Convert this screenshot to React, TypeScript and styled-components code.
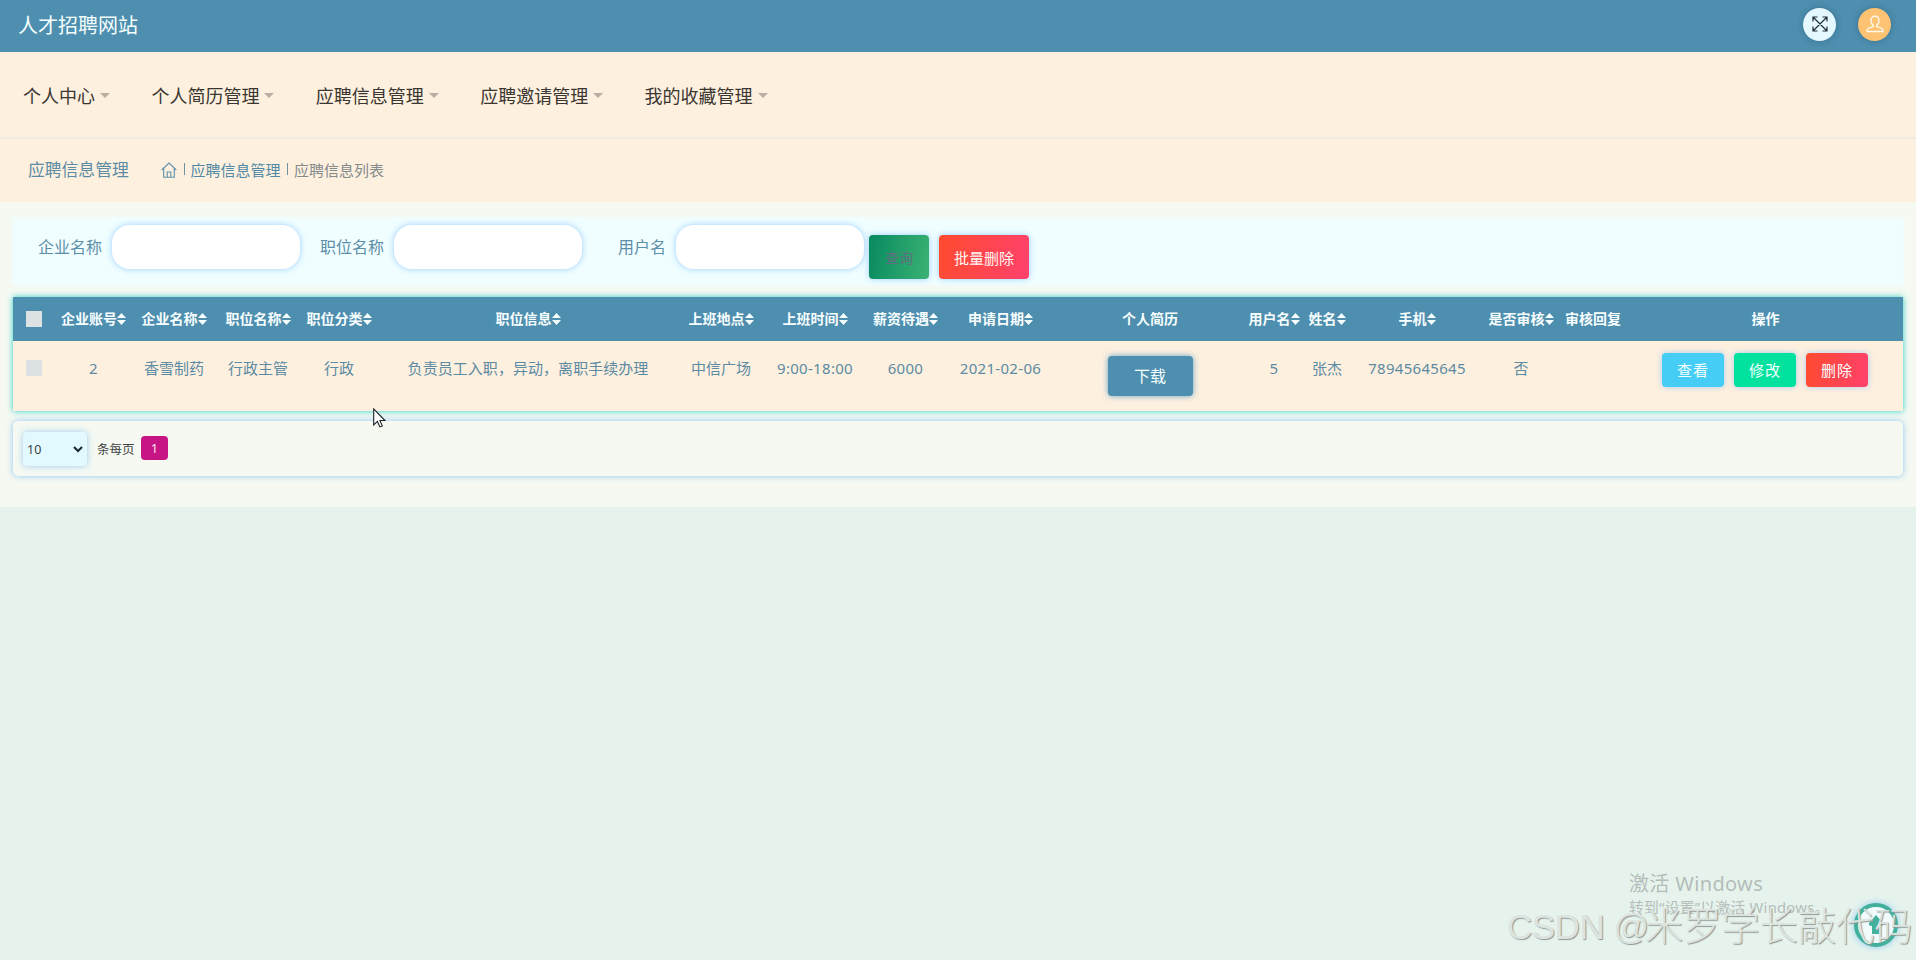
import React from "react";
import styled, { createGlobalStyle } from "styled-components";

const GlobalStyle = createGlobalStyle`
  * { box-sizing: border-box; }
  body {
    margin: 0;
    background: #e6f3ed;
    font-family: "Noto Sans", "Noto Sans CJK SC", sans-serif;
    font-size: 15px;
    color: #5c8ba3;
    overflow: hidden;
  }
  button, input, select { font-family: inherit; }
`;

const Page = styled.div`
  position: relative;
  height: 960px;
  overflow: hidden;
`;

const Header = styled.header`
  height: 52px;
  padding: 0 25px 0 18px;
  display: flex;
  align-items: center;
  justify-content: space-between;
  background: #4e8eae;
`;

const Brand = styled.h1`
  margin: 0;
  font-size: 20px;
  line-height: 28px;
  font-weight: 400;
  color: #f4feff;
`;

const HeaderActions = styled.div`
  display: flex;
  gap: 22px;
  padding-bottom: 4px;
`;

const RoundButton = styled.button<{ $bg: string }>`
  width: 33px;
  height: 33px;
  padding: 0;
  display: flex;
  align-items: center;
  justify-content: center;
  border: 0;
  border-radius: 50%;
  background: ${(p) => p.$bg};
  box-shadow: 0 0 6px rgba(30, 80, 110, 0.45);
`;

const Nav = styled.nav`
  height: 87px;
  padding: 2px 24px 0 23px;
  display: flex;
  align-items: center;
  gap: 41.4px;
  background: #fef0df;
  border-bottom: 2px solid #efebe2;
`;

const NavItem = styled.a`
  display: flex;
  align-items: center;
  gap: 5px;
  font-size: 18px;
  line-height: 26px;
  color: #3a3631;

  &::after {
    content: "";
    border: 5px solid transparent;
    border-top-color: #b9aea1;
    border-bottom: 0;
  }
`;

const Crumbs = styled.div`
  height: 63px;
  padding: 0 28px 2px;
  display: flex;
  align-items: center;
  background: #fef0df;
`;

const CrumbTitle = styled.h2`
  margin: 0 32px 0 0;
  width: 101px;
  font-size: 16.800px;
  line-height: 24px;
  font-weight: 400;
  white-space: nowrap;
`;

const CrumbText = styled.span<{ $muted?: boolean }>`
  font-size: 15px;
  line-height: 22px;
  color: ${(p) => (p.$muted ? "#848b8b" : "#5089a5")};
`;

const CrumbBar = styled.i`
  width: 1px;
  height: 12px;
  margin: 0 6px 2px 6.500px;
  background: #6f92a1;
`;

const Content = styled.main`
  height: 305px;
  padding: 16px 13px 0;
  background: #f5f9f2;
`;

const Filters = styled.form`
  height: 67px;
  padding: 7px 0 0 25px;
  display: flex;
  align-items: flex-start;
  background: #f0feff;
  box-shadow: 0 0 4px #f0feff;
`;

const Field = styled.label<{ $after: number }>`
  display: flex;
  align-items: center;
  gap: 10px;
  margin-right: ${(p) => p.$after}px;
  font-size: 16px;
  line-height: 24px;
  color: #5e8fa9;
`;

const TextInput = styled.input`
  width: 188px;
  height: 44px;
  padding: 0 14px;
  border: 0;
  border-radius: 18px;
  background: #fff;
  box-shadow: 0 0 6px rgba(110, 180, 250, 0.65);
`;

const FilterButton = styled.button<{ $w: number; $bg: string; $color: string; $size: number }>`
  width: ${(p) => p.$w}px;
  height: 44px;
  margin: 10px 10px 0 0;
  padding: 0;
  border: 0;
  border-radius: 4px;
  background: ${(p) => p.$bg};
  color: ${(p) => p.$color};
  font-size: ${(p) => p.$size}px;
  box-shadow: 0 0 6px rgba(110, 180, 250, 0.65);
`;

const Table = styled.table`
  width: 100%;
  margin-top: 12px;
  table-layout: fixed;
  border-collapse: collapse;
  background: #fef0df;
  box-shadow: 0 0 6px rgba(25, 205, 195, 0.95);
`;

const Th = styled.th`
  height: 44px;
  padding: 0;
  background: #4e8eae;
  color: #f7feff;
  font-size: 14px;
  line-height: 20px;
  white-space: nowrap;
`;

const HeadLabel = styled.span`
  display: flex;
  align-items: center;
  justify-content: center;
`;

const Td = styled.td<{ $top?: number; $numeric?: boolean }>`
  height: 70px;
  padding: ${(p) => p.$top ?? 16}px 0 0;
  vertical-align: top;
  text-align: center;
  line-height: 22px;
  letter-spacing: ${(p) => (p.$numeric ? 0.3 : 0.05)}px;
  white-space: nowrap;
`;

const Check = styled.i`
  display: block;
  width: 16px;
  height: 16px;
  margin-left: 13px;
  background: #dce1e3;
`;

const Download = styled.button`
  width: 85px;
  height: 40px;
  padding: 0 0 2px;
  border: 0;
  border-radius: 4px;
  background: #4e8eae;
  color: #f4feff;
  font-size: 16px;
  box-shadow: 0 0 6px rgba(50, 140, 190, 0.75);
`;

const RowActions = styled.div`
  display: flex;
  justify-content: center;
  gap: 10px;
  padding-right: 2px;
`;

const ActionButton = styled.button<{ $bg: string }>`
  width: 62px;
  height: 34px;
  padding: 0 0 2px 1px;
  border: 0;
  border-radius: 4px;
  background: ${(p) => p.$bg};
  color: #f5ffff;
  font-size: 15px;
  letter-spacing: 1px;
  box-shadow: 0 0 6px rgba(110, 180, 250, 0.6);
`;

const Pager = styled.div`
  height: 55px;
  margin-top: 10px;
  padding: 1px 10px 0;
  display: flex;
  align-items: center;
  border-radius: 5px;
  box-shadow: 0 0 6px rgba(110, 180, 240, 0.75);
  font-size: 12.5px;
  color: #3e4444;
`;

const PageSize = styled.div`
  width: 64px;
  height: 34px;
  margin-right: 10px;
  padding: 0 4px;
  display: flex;
  align-items: center;
  justify-content: space-between;
  border-radius: 4px;
  background: #e2f9ff;
  box-shadow: 0 0 6px rgba(110, 180, 240, 0.65);
  font-size: 12.500px;
`;

const PageLabel = styled.span`
  width: 38px;
  padding-bottom: 1px;
  white-space: nowrap;
`;

const PageButton = styled.button`
  width: 27px;
  height: 24px;
  margin: 0 0 3px 6px;
  padding: 1px 0 0;
  border: 0;
  border-radius: 4px;
  background: #c71585;
  color: #fbe6f3;
  font-size: 13px;
`;

const Pointer = styled.svg`
  position: absolute;
  left: 373px;
  top: 408px;
`;

const Activation = styled.div`
  position: absolute;
  left: 1629px;
  top: 870px;
  color: #b4bdb9;
  white-space: nowrap;
`;

const ActivationTitle = styled.div`
  font-size: 20px;
  line-height: 28px;
  letter-spacing: 0.350px;
`;

const ActivationHint = styled.div`
  font-size: 14.8px;
  line-height: 19px;
  letter-spacing: 0.250px;
`;

const ToTop = styled.button`
  position: absolute;
  left: 1854px;
  top: 903px;
  width: 44px;
  height: 44px;
  padding: 0;
  display: flex;
  align-items: center;
  justify-content: center;
  border: 4px solid #43b09b;
  border-radius: 50%;
  background: #f1fbfc;
  box-shadow: 0 0 6px rgba(110, 190, 240, 0.8);
`;

const Watermark = styled.div`
  position: absolute;
  left: 1507px;
  top: 900px;
  display: flex;
  font-family: "Liberation Sans", "Noto Sans CJK SC", sans-serif;
  font-weight: 300;
  font-size: 38.200px;
  line-height: 54px;
  color: #dde4e0;
  text-shadow: 1px 1px 1px #8f9794;
  white-space: nowrap;
`;

const WatermarkLatin = styled.span`
  font-size: 35px;
  width: 138px;
  letter-spacing: -0.5px;
`;

const SortIcon = () => (
  <svg width="9" height="12" viewBox="0 0 9 12" fill="#f7feff">
    <path d="M4.5 0 9 5H0zM4.5 12 0 7h9z" />
  </svg>
);

const columns = [
  { label: "企业账号", width: 77, sortable: true, numeric: true, value: "2" },
  { label: "企业名称", width: 84, sortable: true, value: "香雪制药" },
  { label: "职位名称", width: 84, sortable: true, value: "行政主管" },
  { label: "职位分类", width: 78, sortable: true, value: "行政" },
  { label: "职位信息", width: 300, sortable: true, value: "负责员工入职，异动，离职手续办理" },
  { label: "上班地点", width: 86, sortable: true, value: "中信广场" },
  { label: "上班时间", width: 102, sortable: true, numeric: true, value: "9:00-18:00" },
  { label: "薪资待遇", width: 79, sortable: true, numeric: true, value: "6000" },
  { label: "申请日期", width: 111, sortable: true, numeric: true, value: "2021-02-06" },
  { label: "个人简历", width: 188, kind: "download" },
  { label: "用户名", width: 60, sortable: true, numeric: true, value: "5" },
  { label: "姓名", width: 46, sortable: true, value: "张杰" },
  { label: "手机", width: 134, sortable: true, numeric: true, value: "78945645645" },
  { label: "是否审核", width: 74, sortable: true, value: "否" },
  { label: "审核回复", width: 70, value: "" },
  { label: "操作", width: 275, kind: "actions" },
];

const menus = ["个人中心", "个人简历管理", "应聘信息管理", "应聘邀请管理", "我的收藏管理"];

const redGradient = "linear-gradient(100deg, #ff4b2f, #ff416c)";

export default function App() {
  return (
    <Page>
      <GlobalStyle />
      <Header>
        <Brand>人才招聘网站</Brand>
        <HeaderActions>
          <RoundButton $bg="#e3f8ff">
            <svg width="16" height="16" viewBox="0 0 16 16" fill="none" stroke="#222c33" strokeWidth="1.2">
              <path d="M1 1l14 14M15 1L1 15M1 5.5V1h4.5M10.5 1H15v4.5M15 10.5V15h-4.5M5.5 15H1v-4.5" />
            </svg>
          </RoundButton>
          <RoundButton $bg="#fdc272">
            <svg width="18" height="18" viewBox="0 0 18 18" fill="none" stroke="#fff8ea" strokeWidth="1.4">
              <path d="M9 1.2c-2.6 0-4 1.8-4 4.2 0 2.600 1.200 4.200 2.300 5v1.200L2.800 13.200C1.700 13.700 1 14.700 1 16.500h16c0-1.800-.7-2.800-1.800-3.300l-4.500-1.600v-1.200c1.100-.8 2.300-2.400 2.300-5 0-2.400-1.400-4.200-4-4.200z" />
            </svg>
          </RoundButton>
        </HeaderActions>
      </Header>

      <Nav>
        {menus.map((m) => (
          <NavItem key={m}>{m}</NavItem>
        ))}
      </Nav>

      <Crumbs>
        <CrumbTitle>应聘信息管理</CrumbTitle>
        <svg width="16" height="16" viewBox="0 0 16 16" fill="none" stroke="#5f91aa" strokeWidth="1.1">
          <path d="M.7 8L8 1l7.300 7M2.700 6.500v8.800h10.600V6.500M6.200 15.300V10h3.600v5.300" />
        </svg>
        <CrumbBar />
        <CrumbText>应聘信息管理</CrumbText>
        <CrumbBar />
        <CrumbText $muted>应聘信息列表</CrumbText>
      </Crumbs>

      <Content>
        <Filters>
          <Field $after={20}>企业名称<TextInput /></Field>
          <Field $after={36}>职位名称<TextInput /></Field>
          <Field $after={5}>用户名<TextInput /></Field>
          <FilterButton type="button" $w={60} $size={14} $color="#5f6f7f" $bg="linear-gradient(100deg, #078a60, #3bb273)">
            查询
          </FilterButton>
          <FilterButton type="button" $w={90} $size={15} $color="#fff5f2" $bg={redGradient}>
            批量删除
          </FilterButton>
        </Filters>

        <Table>
          <colgroup>
            <col width={42} />
            {columns.map((c) => (
              <col key={c.label} width={c.width} />
            ))}
          </colgroup>
          <thead>
            <tr>
              <Th><Check /></Th>
              {columns.map((c) => (
                <Th key={c.label}>
                  <HeadLabel>
                    {c.label}
                    {c.sortable && <SortIcon />}
                  </HeadLabel>
                </Th>
              ))}
            </tr>
          </thead>
          <tbody>
            <tr>
              <Td $top={19}><Check /></Td>
              {columns.map((c) => {
                if (c.kind === "download")
                  return <Td key={c.label} $top={15}><Download>下载</Download></Td>;
                if (c.kind === "actions")
                  return (
                    <Td key={c.label} $top={12}>
                      <RowActions>
                        <ActionButton $bg="#45cdf5">查看</ActionButton>
                        <ActionButton $bg="#02e29f">修改</ActionButton>
                        <ActionButton $bg={redGradient}>删除</ActionButton>
                      </RowActions>
                    </Td>
                  );
                return <Td key={c.label} $numeric={c.numeric}>{c.value}</Td>;
              })}
            </tr>
          </tbody>
        </Table>

        <Pager>
          <PageSize>
            10
            <svg width="10" height="7" viewBox="0 0 10 7" fill="none" stroke="#17252b" strokeWidth="2">
              <path d="M1 1l4 4 4-4" />
            </svg>
          </PageSize>
          <PageLabel>条每页</PageLabel>
          <PageButton>1</PageButton>
        </Pager>
      </Content>

      <Activation>
        <ActivationTitle>激活 Windows</ActivationTitle>
        <ActivationHint>转到“设置”以激活 Windows。</ActivationHint>
      </Activation>
      <ToTop>
        <svg width="16" height="20" viewBox="0 0 16 20" fill="#43b09b">
          <path d="M8 0l7 8q1 3-3 3v8H4v-8q-4 0-3-3z" />
        </svg>
      </ToTop>
      <Watermark>
        <WatermarkLatin>CSDN @</WatermarkLatin>
        米罗学长敲代码
      </Watermark>
      <Pointer width="13" height="20" viewBox="0 0 13 20">
        <path d="M.7.9v16l3.700-3.500 2.500 5.500 2.400-1-2.400-5.400h5z" fill="#fff" stroke="#1d2226" strokeWidth="1.100" />
      </Pointer>
    </Page>
  );
}
